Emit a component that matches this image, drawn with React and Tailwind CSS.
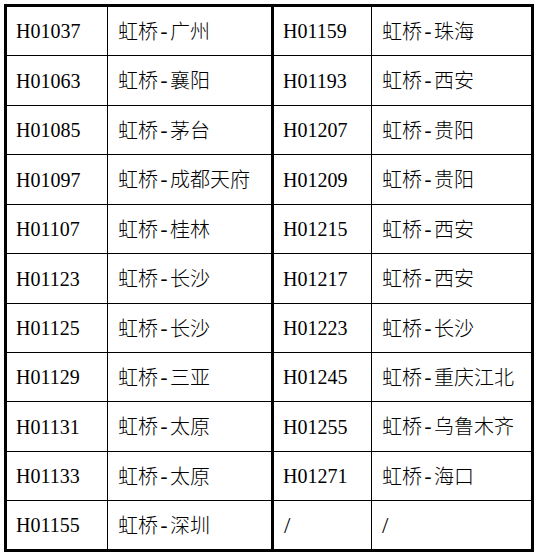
const rows = [
  ["H01037", "虹桥-广州", "H01159", "虹桥-珠海", "h-[49px] border-b"],
  ["H01063", "虹桥-襄阳", "H01193", "虹桥-西安", "h-[50px] border-b"],
  ["H01085", "虹桥-茅台", "H01207", "虹桥-贵阳", "h-[49px] border-b"],
  ["H01097", "虹桥-成都天府", "H01209", "虹桥-贵阳", "h-[50px] border-b"],
  ["H01107", "虹桥-桂林", "H01215", "虹桥-西安", "h-[49px] border-b"],
  ["H01123", "虹桥-长沙", "H01217", "虹桥-西安", "h-[50px] border-b"],
  ["H01125", "虹桥-长沙", "H01223", "虹桥-长沙", "h-[49px] border-b"],
  ["H01129", "虹桥-三亚", "H01245", "虹桥-重庆江北", "h-[49px] border-b"],
  ["H01131", "虹桥-太原", "H01255", "虹桥-乌鲁木齐", "h-[50px] border-b"],
  ["H01133", "虹桥-太原", "H01271", "虹桥-海口", "h-[49px] border-b"],
  ["H01155", "虹桥-深圳", "/", "/", "h-[48px]"],
];

const code = "flex items-center pl-[9px] text-[20px] font-['Liberation_Serif',serif]";
const name = "flex items-center pl-[10px] pt-[5px] text-[20px] font-light font-['Liberation_Mono','Noto_Sans_CJK_SC',monospace]";
const slash = "flex items-center pl-[10px] pt-[2px] text-[23px] font-['Liberation_Serif',serif]";

export default function App() {
  return (
    <div className="bg-white w-[538px] h-[557px] p-[4px] text-black">
      <div className="w-[530px] border-[3px] border-black">
        {rows.map((r, i) => (
          <div key={i} className={`flex border-black ${r[4]}`}>
            <div className={`${code} w-[101px] border-r border-black`}>{r[0]}</div>
            <div className={`${name} w-[166px] border-r-[3px] border-black`}>{r[1]}</div>
            <div className={`${r[2] === "/" ? slash : code} w-[98px] border-r border-black`}>{r[2]}</div>
            <div className={`${r[3] === "/" ? slash : name} flex-1`}>{r[3]}</div>
          </div>
        ))}
      </div>
    </div>
  );
}
